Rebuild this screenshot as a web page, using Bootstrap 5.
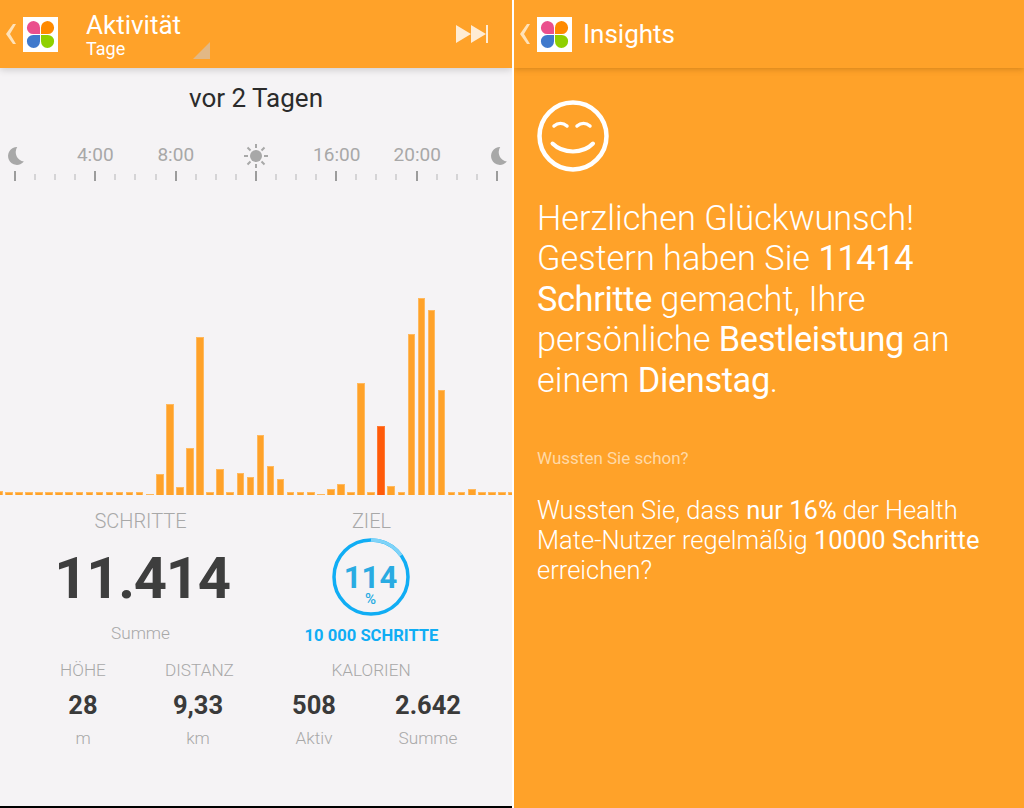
<!DOCTYPE html>
<html lang="de">
<head>
  <meta charset="UTF-8">
  <title>Health Mate</title>
  <meta name="viewport" content="width=device-width, initial-scale=1">
  <link href="https://cdn.jsdelivr.net/npm/bootstrap@5.3.2/dist/css/bootstrap.min.css" rel="stylesheet">
  <style>
    body {
      background: #fff;
      font-family: Roboto, "Liberation Sans", sans-serif;
      width: 1024px;
      height: 808px;
      overflow: hidden;
    }
    .screens { height: 808px; gap: 2px; }
    .phone-left {
      width: 512px;
      background: #f5f3f5;
      border-bottom: 2px solid #000;
      overflow: hidden;
    }
    .phone-right {
      width: 510px;
      background: #ffa229;
      color: #fff;
      overflow: hidden;
    }
    .top-bar {
      height: 68px;
      background: #ffa229;
      color: #fff;
      padding-left: 4px;
      box-shadow: 0 2px 7px rgba(0,0,0,.16);
    }
    .top-bar.on-orange { box-shadow: 0 1px 6px rgba(150,90,10,.45); }
    .app-logo { margin-left: 7px; flex-shrink: 0; }
    .title-block { margin-left: 28px; width: 107px; }
    .title-main { font-size: 26px; line-height: 28px; margin-top: 11px; }
    .title-sub { font-size: 18px; line-height: 20px; }
    .title-insights { font-size: 26px; margin-left: 11px; }
    .spinner-mark { align-self: flex-end; margin-bottom: 9px; }
    .skip-btn { margin-left: auto; margin-right: 24px; }
    .day-title { font-size: 26px; color: #2b2b2b; text-align: center; margin-top: 15px; line-height: 30px; }
    .hour-row { margin: 28px 0 0 -25.5px; width: 564px; height: 26px; color: #a8a8a8; font-size: 19px; }
    .hour-row > div { width: 80.5px; text-align: center; line-height: 28px; }
    .tick-row { margin: 3px 14px 0 14px; height: 11px; align-items: flex-end; }
    .tick { width: 2px; height: 6px; background: #d5d4d6; margin-bottom: 1px; }
    .tick.major { height: 10px; background: #9c9c9c; margin-bottom: 0; }
    .bars { height: 314px; margin-left: -5px; width: 530px; gap: 2.47px; align-items: flex-end; }
    .bar { width: 7.6px; flex-shrink: 0; background: #ffa229; border: 1px solid #ffb95e; border-bottom: 0; }
    .bar.today { background: #ff5a0a; border-color: #ff7a33; }
    .stat-grid { margin-top: 15px; }
    .stat-left { width: 281px; text-align: center; }
    .stat-right { width: 181px; text-align: center; }
    .stat-label { color: #a8a8a8; font-size: 17.2px; line-height: 22px; font-weight: 300; }
    .stat-head { color: #a8a8a8; font-size: 20px; line-height: 22px; font-weight: 300; }
    .stat-big { font-size: 58px; font-weight: 700; color: #3e3e3e; line-height: 72px; letter-spacing: -1.3px; margin-top: 10px; margin-bottom: 8px; padding-left: 3px; }
    .stat-goal { color: #10adf4; font-size: 16.6px; font-weight: 700; line-height: 20px; margin-top: 9px; }
    .ring-box { width: 80px; height: 80px; margin: 5px auto 0; position: relative; left: -1px; }
    .ring-text { position: absolute; inset: 0; color: #29abe2; text-align: center; }
    .ring-num { font-size: 31px; font-weight: 700; line-height: 26px; margin-top: 28px; }
    .ring-pct { font-size: 15px; font-weight: 500; line-height: 12px; margin-top: 2px; }
    .stat-row { margin-top: 13px; }
    .stat-small { font-size: 25.5px; font-weight: 700; color: #3a3a3a; line-height: 30px; margin: 9px 0 7px; }
    .cell { text-align: center; }
    .cell-height { width: 166px; }
    .cell-dist { width: 66px; margin-left: -1px; }
    .cell-cal { width: 228px; margin-left: 26px; }
    .congrats { font-size: 34.3px; font-weight: 300; line-height: 40.4px; margin: 26px 0 0 23px; width: 480px; }
    .congrats b { font-weight: 400; letter-spacing: -.35px; }
    .fact b { font-weight: 400; }
    .smile { margin: 32px 0 0 23px; display: block; }
    .know-label { font-size: 17px; color: #ffd9a6; margin: 48px 0 0 23px; line-height: 20px; }
    .fact { font-size: 25.5px; font-weight: 300; line-height: 30px; margin: 27px 0 0 23px; width: 480px; }
  </style>
</head>
<body>
  <div class="d-flex screens">
    <div class="phone-left">
      <div class="top-bar d-flex align-items-center">
        <svg width="12" height="22" viewBox="0 0 12 22"><path d="M9 1 2 11l7 10h3L6 11l6-10z" fill="#ffe2b8"/></svg>
        <svg class="app-logo" width="35" height="35" viewBox="0 0 36 36"><rect width="36" height="36" fill="#fff"/><path d="M11 4a7 7 0 0 0-7 7 6.500 6.500 0 0 0 6.500 6.500H17.500V11a7 7 0 0 0-6.500-7z" fill="#ea4f8d"/><path d="M25 4a7 7 0 0 1 7 7 6.500 6.500 0 0 1-6.500 6.500H18.500V11a7 7 0 0 1 6.500-7z" fill="#ff8a00"/><path d="M11 32a7 7 0 0 1-7-7 6.500 6.500 0 0 1 6.500-6.500H17.500V25a7 7 0 0 1-6.500 7z" fill="#3f79cc"/><path d="M25 32a7 7 0 0 0 7-7 6.500 6.500 0 0 0-6.500-6.500H18.500V25a7 7 0 0 0 6.500 7z" fill="#8fd000"/></svg>
        <div class="title-block align-self-start">
          <div class="title-main">Aktivität</div>
          <div class="title-sub">Tage</div>
        </div>
        <svg class="spinner-mark" width="17" height="17" viewBox="0 0 17 17"><path d="M17 0V17H0z" fill="#e2b885"/></svg>
        <svg class="skip-btn" width="32" height="18" viewBox="0 0 32 18"><path d="M0 0 15 9 0 18zM15 0 30 9 15 18z" fill="#ffecd4"/><rect x="30" y="0" width="2" height="18" fill="#ffecd4"/></svg>
      </div>

      <div class="day-title">vor 2 Tagen</div>

      <div class="hour-row d-flex">
        <div><svg width="20" height="20" viewBox="0 0 18 18"><path d="M11 1a8 8 0 1 0 6 13A8.500 8.500 0 0 1 11 1z" fill="#a8a8a8"/></svg></div>
        <div>4:00</div>
        <div>8:00</div>
        <div><svg width="26" height="26" viewBox="0 0 26 26" fill="none"><circle cx="13" cy="13" r="6" fill="#a8a8a8"/><path d="M13 1v4M13 21v4M1 13h4M21 13h4M4.500 4.500l3 3M18.500 18.500l3 3M4.500 21.500l3-3M18.500 7.500l3-3" stroke="#a8a8a8" stroke-width="2"/></svg></div>
        <div>16:00</div>
        <div>20:00</div>
        <div><svg width="20" height="20" viewBox="0 0 18 18"><path d="M11 1a8 8 0 1 0 6 13A8.500 8.500 0 0 1 11 1z" fill="#a8a8a8"/></svg></div>
      </div>
      <div class="tick-row d-flex justify-content-between" id="tickRow"></div>

      <div class="bars d-flex" id="bars"></div>

      <div class="stat-grid d-flex">
        <div class="stat-left">
          <div class="stat-head">SCHRITTE</div>
          <div class="stat-big">11.414</div>
          <div class="stat-label">Summe</div>
        </div>
        <div class="stat-right">
          <div class="stat-head">ZIEL</div>
          <div class="ring-box">
            <svg width="80" height="80" viewBox="0 0 80 80" fill="none">
              <circle cx="40" cy="40" r="37" stroke="#10adf4" stroke-width="3.500"/>
              <path d="M40 3A37 37 0 0 1 70 18.500" stroke="#7fd3f8" stroke-width="3.500"/>
            </svg>
            <div class="ring-text">
              <div class="ring-num">114</div>
              <div class="ring-pct">%</div>
            </div>
          </div>
          <div class="stat-goal">10 000 SCHRITTE</div>
        </div>
      </div>

      <div class="d-flex stat-row">
        <div class="cell cell-height"><div class="stat-label">HÖHE</div><div class="stat-small">28</div><div class="stat-label">m</div></div>
        <div class="cell cell-dist"><div class="stat-label">DISTANZ</div><div class="stat-small">9,33</div><div class="stat-label">km</div></div>
        <div class="cell cell-cal">
          <div class="stat-label">KALORIEN</div>
          <div class="d-flex">
            <div class="col"><div class="stat-small">508</div><div class="stat-label">Aktiv</div></div>
            <div class="col"><div class="stat-small">2.642</div><div class="stat-label">Summe</div></div>
          </div>
        </div>
      </div>
    </div>

    <div class="phone-right">
      <div class="top-bar on-orange d-flex align-items-center">
        <svg width="12" height="22" viewBox="0 0 12 22"><path d="M9 1 2 11l7 10h3L6 11l6-10z" fill="#ffe2b8"/></svg>
        <svg class="app-logo" width="35" height="35" viewBox="0 0 36 36"><rect width="36" height="36" fill="#fff"/><path d="M11 4a7 7 0 0 0-7 7 6.500 6.500 0 0 0 6.500 6.500H17.500V11a7 7 0 0 0-6.500-7z" fill="#ea4f8d"/><path d="M25 4a7 7 0 0 1 7 7 6.500 6.500 0 0 1-6.500 6.500H18.500V11a7 7 0 0 1 6.500-7z" fill="#ff8a00"/><path d="M11 32a7 7 0 0 1-7-7 6.500 6.500 0 0 1 6.500-6.500H17.500V25a7 7 0 0 1-6.500 7z" fill="#3f79cc"/><path d="M25 32a7 7 0 0 0 7-7 6.500 6.500 0 0 0-6.500-6.500H18.500V25a7 7 0 0 0 6.500 7z" fill="#8fd000"/></svg>
        <div class="title-insights">Insights</div>
      </div>
      <svg class="smile" width="72" height="72" viewBox="0 0 72 72" fill="none" stroke="#fff" stroke-linecap="round">
        <circle cx="36" cy="36" r="33.500" stroke-width="4.500"/>
        <path d="M15.500 43.500C26 54 46 54 56 43.500" stroke-width="4"/>
        <path d="M17 26c4-3.500 9-3.500 13 0M40 26c4-3.500 9-3.500 13 0" stroke-width="3.500"/>
      </svg>
      <div class="congrats">Herzlichen Glückwunsch!<br>Gestern haben Sie <b>11414</b><br><b>Schritte</b> gemacht, Ihre<br>persönliche <b>Bestleistung</b> an<br>einem <b>Dienstag</b>.</div>
      <div class="know-label">Wussten Sie schon?</div>
      <div class="fact">Wussten Sie, dass <b>nur 16%</b> der Health<br>Mate-Nutzer regelmäßig <b>10000 Schritte</b><br>erreichen?</div>
    </div>
  </div>

  <script>
    // bar heights per half hour, in px
    const steps = [4,3,3,3,3,3,3,3,3,3,3,3,3,3,3,1,21,91,8,47,158,3,26,3,22,18,60,29,16,3,3,3,1,6,11,3,112,3,69,9,3,161,197,185,105,3,3,6,3,3,3,3];
    const bars = document.getElementById("bars");
    steps.forEach((h, i) => {
      const el = document.createElement("div");
      el.className = i === 38 ? "bar today" : "bar";
      el.style.height = h + "px";
      bars.appendChild(el);
    });

    const ticks = document.getElementById("tickRow");
    for (let i = 0; i <= 24; i++) {
      const t = document.createElement("div");
      t.className = i % 4 === 0 ? "tick major" : "tick";
      ticks.appendChild(t);
    }
  </script>
  <script src="https://cdn.jsdelivr.net/npm/bootstrap@5.3.2/dist/js/bootstrap.bundle.min.js"></script>
</body>
</html>
